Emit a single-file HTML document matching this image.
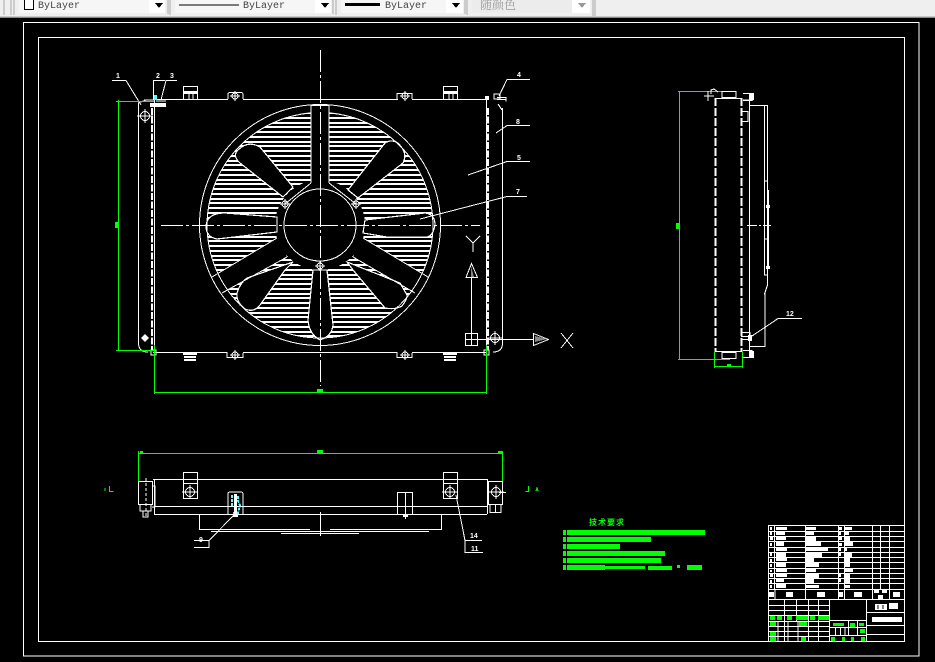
<!DOCTYPE html>
<html><head><meta charset="utf-8"><style>
html,body{margin:0;padding:0;background:#000;width:935px;height:662px;overflow:hidden}
svg{display:block}
.w{fill:none;stroke:#fff;stroke-width:1}
.t{font-family:"Liberation Sans",sans-serif;font-size:7px;fill:#fff;font-weight:bold}
.b{font-family:"Liberation Mono",monospace;font-size:10px;fill:#444}
</style></head><body>
<svg width="935" height="662" viewBox="0 0 935 662" shape-rendering="crispEdges" xmlns="http://www.w3.org/2000/svg">
<defs>
<clipPath id="c"><circle cx="320" cy="225" r="113"/></clipPath>
<g id="tg"><path class="w" d="M-8 0h16M0-7v14"/><circle class="w" r="4.5"/></g>
<g id="sm"><path class="w" d="M-5 0h10M0-5v10"/><circle class="w" r="3" stroke-width="2"/></g>
</defs>
<rect width="935" height="662" fill="#000"/>
<!-- toolbar -->
<rect width="935" height="18" fill="#efefef"/>
<rect y="17" width="935" height="1" fill="#8a8a8a"/>
<rect y="16" width="935" height="1" fill="#c8c8c8"/>
<path d="M4 0v15M11 0v15M14 0v15M170 0v15M336 0v15M467 0v15M593 0v16M595 0v16M168 0v14M333 0v14M465 0v14" stroke="#a8a8a8" fill="none"/>
<rect x="19" y="0" width="146" height="13" fill="#f6f6f6"/><rect x="149" y="0" width="16" height="13" fill="#fff"/>
<rect x="175" y="0" width="156" height="13" fill="#f6f6f6"/><rect x="315" y="0" width="16" height="13" fill="#fff"/>
<rect x="341" y="0" width="122" height="13" fill="#f6f6f6"/><rect x="446" y="0" width="17" height="13" fill="#fff"/>
<rect x="472" y="0" width="100" height="13" fill="#ececec"/><rect x="572" y="0" width="18" height="13" fill="#fff"/>
<rect x="24.5" y="-1" width="9" height="10.5" fill="#fff" stroke="#000"/>
<text class="b" x="38" y="8">ByLayer</text>
<path d="M179 5h60" stroke="#000"/>
<text class="b" x="243" y="8">ByLayer</text>
<rect x="345" y="3" width="35" height="3" fill="#000"/>
<text class="b" x="385" y="8">ByLayer</text>
<text x="480" y="9" font-family="'Liberation Sans','Noto Serif CJK SC',serif" font-size="12" fill="#999">随颜色</text>
<path d="M155 3h8l-4 5zM321 3h8l-4 5zM452 3h8l-4 5z" fill="#000"/>
<path d="M578 3h8l-4 5z" fill="#999"/>
<!-- borders -->
<rect x="23.5" y="22.5" width="895.5" height="633.5" class="w"/>
<rect x="38.5" y="37.5" width="866" height="604" class="w"/>
<!-- fan hatch -->
<g clip-path="url(#c)">
<path stroke="#fff" stroke-width="2" fill="none" d="M190 113h260M190 118h260M190 123h260M190 127h260M190 132h260M190 137h260M190 142h260M190 146h260M190 151h260M190 156h260M190 161h260M190 165h260M190 170h260M190 175h260M190 180h260M190 184h260M190 189h260M190 194h260M190 199h260M190 203h260M190 208h260M190 213h260M190 218h260M190 222h260M190 227h260M190 232h260M190 237h260M190 241h260M190 246h260M190 251h260M190 256h260M190 260h260M190 265h260M190 270h260M190 275h260M190 279h260M190 284h260M190 289h260M190 294h260M190 298h260M190 303h260M190 308h260M190 313h260M190 317h260M190 322h260M190 327h260M190 332h260M190 336h260"/>
</g>
<g>
<circle cx="320" cy="225" r="45" fill="#000"/>
<rect x="311" y="104" width="18" height="85" fill="#000"/>
<path d="M277 238L212 277L222 293L287 257Z" fill="#000"/>
<path d="M363 238L428 277L415 293L353 257Z" fill="#000"/>
<g fill="#000" stroke="#fff" stroke-width="1.2">
<path d="M293 187L260 147Q248 140 238 150Q232 156 240 163L283 197Z"/>
<path d="M348 190L385 143Q395 137 402 148Q407 155 403 163L358 198Z"/>
<path d="M277 217L225 213Q207 213 206 226Q206 237 217 239L277 232Z"/>
<path d="M365 220L425 213Q435 214 435 225Q433 236 427 237L387 237L363 233Z"/>
<path d="M313 270L308 320Q309 334 320 340Q332 336 333 325L327 270Z"/>
<path d="M293 262L285 270L260 305Q254 313 245 309Q236 302 237 293Q240 283 247 278Z"/>
<path d="M347 262L353 270L385 308Q395 310 402 306Q408 298 407 295L400 283Z"/>
</g>
<g class="w">
<circle cx="320" cy="225" r="36"/>
<circle cx="320" cy="225" r="120.5"/>
<path d="M207 225A113 113 0 0 1 311 113M329 113A113 113 0 0 1 433 225A113 113 0 0 1 320 338A113 113 0 0 1 207 225"/>
<path d="M311 105.500V183M329 105.500V183M311 105.500H329M277 238L212 277M287 257L222 293M363 238L428 277M353 257L415 293M285 204L311 183M356 204L329 183"/>
</g>
</g>
<use href="#sm" x="285" y="204"/><use href="#sm" x="356" y="204"/><use href="#sm" x="320" y="266"/>
<!-- center lines -->
<path stroke="#fff" stroke-dasharray="22 3 3 3" fill="none" d="M320.5 50V386M161 225.5H480"/>
<!-- main frame -->
<path class="w" d="M153 99.5H487M227 99.5h1v-5q0-2 2-2h11q2 0 2 2v5M397 99.5v-6h15v6"/>
<path stroke="#000" d="M228 99.5h15M398 99.5h14"/>
<path class="w" d="M153 352.5H227v5h16v-5H397v5h15v-5H487"/>
<path stroke="#000" d="M228 352.5h15M398 352.5h14"/>
<path class="w" d="M138.500 103V343Q138.500 352 148 352M154.500 100V352M502.500 108V343Q502.500 352 493 352M486.500 99V352"/>
<path fill="none" stroke="#fff" stroke-width="2" stroke-dasharray="7 1.500" d="M152 108V350M488 108V350"/>
<path class="w" d="M151 350h5v5h-5zM484 350h5v5h-5z"/>
<use href="#sm" x="235" y="96"/><use href="#sm" x="405" y="96"/>
<use href="#sm" x="235" y="355"/><use href="#sm" x="405" y="355"/>
<use href="#tg" x="145" y="116"/><use href="#tg" x="495" y="338"/>
<circle cx="145" cy="338" r="3" fill="#fff"/><path class="w" d="M141 338h8M145 334v8"/>
<!-- top boxes -->
<path class="w" d="M183.500 86.500h14v13h-14zM443.500 86.500h14v13h-14z"/>
<rect x="184" y="91" width="13" height="3" fill="#fff"/><rect x="444" y="91" width="13" height="3" fill="#fff"/>
<path class="w" d="M189 94v5M193 94v5M449 94v5M453 94v5"/>
<path stroke="#fff" stroke-width="2" fill="none" d="M183 354h14M184 357h12M184 360h12M443 354h14M444 357h12M444 360h12"/>
<!-- top-left details -->
<rect x="150" y="103" width="16" height="4" fill="#fff"/>
<rect x="153" y="95" width="4" height="5" fill="#5ff"/>
<path class="w" d="M144 100h10M138 103l8-3M156 101h10"/>
<rect x="485" y="96" width="4" height="4" fill="#fff"/>
<path stroke="#fff" fill="none" d="M494 94h6v5h-6zM497 99.500h9M497 97.500h9v4M498 104l4 6"/>
<!-- leaders -->
<g class="w">
<path d="M112 80.500H126L141 105M153.500 100V80.500H165M177 80.500H166L161 100M530 79.500H507L499 96M530 125.500H507L496 133M530 161.500H507L468 175M527 196.500H507L420 219M802 318.500H778L752 336M235 514L209 540.500H194M194 547.500H209V540M456 495L465 540.500H482M465 540V552.500H483"/>
</g>
<text class="t" x="116" y="78">1</text><text class="t" x="156" y="78">2</text><text class="t" x="170" y="78">3</text>
<text class="t" x="517" y="77">4</text><text class="t" x="516" y="124">8</text><text class="t" x="517" y="160">5</text><text class="t" x="516" y="194">7</text>
<text class="t" x="786" y="316">12</text>
<text class="t" x="199" y="542">9</text><text class="t" x="470" y="538">14</text><text class="t" x="471" y="551">11</text>
<!-- green dims main -->
<path stroke="#0f0" fill="none" d="M118.500 100V351M116 101.500H154M116 350.500H154M154.500 345V394M486.500 345V394M154 392.500H487"/>
<rect x="115" y="222" width="4" height="6" fill="#0f0"/>
<rect x="317" y="389" width="6" height="4" fill="#0f0"/>
<!-- UCS -->
<g>
<path class="w" d="M466 236l7 7 7-7M473 243v9M471.500 273V333M477 339.500H533M561 333l12 15M573 333l-12 15"/>
<path class="w" d="M466 277.500h11.500l-6-14zM533.500 333.500v12l15-6z"/>
<path d="M471 266v11h3zM535 336l12 3-12 3z" fill="#888"/>
</g>
<path class="w" d="M465.500 333.500h12v12h-12zM471.500 333.500v12M465.500 339.500h12"/>
<!-- side view -->
<path stroke="#0f0" fill="none" d="M679.500 91V360M678 91.500H730M678 359.500H730M714.500 352V368M742.500 352V368M714 366.500H743"/>
<rect x="676" y="223" width="4" height="6" fill="#0f0"/><rect x="727" y="364" width="4" height="3" fill="#0f0"/>
<path fill="none" stroke="#fff" stroke-width="2" stroke-dasharray="8 2" d="M715.500 98V352M741.500 98V352"/>
<path class="w" d="M715 98.500h27M715 351.500h27M749.500 93V358M743 93.500h9v7h-9M743 100h10M743 357.500h9v-7h-9M722 92v6M722 352v7M736 92v7M722 352.500h14v6h-14zM722 91.500h14v6h-14zM741 111.500h7v10h-7M741 336.500h9v-4h-9M741 339.500h9"/>
<rect x="750" y="93" width="4" height="7" fill="#fff"/><rect x="750" y="351" width="4" height="7" fill="#fff"/>
<rect x="748" y="335" width="4" height="6" fill="#fff"/>
<path class="w" d="M711 94v-4l3-1 4 3M704 96h10M708 91v10"/>
<path class="w" d="M750 105.500H767.500V275V285L764.500 294H765V346.500H750M764.500 105V275h3M764.500 181h3M764.500 239h3"/>
<rect x="767" y="190" width="2" height="78" fill="#fff"/>
<rect x="766" y="205" width="4" height="3" fill="#fff"/><rect x="766" y="266" width="4" height="3" fill="#fff"/>
<path stroke="#fff" stroke-dasharray="10 2 2 2" d="M747 225.500H771"/>
<!-- bottom view -->
<path stroke="#0f0" fill="none" d="M138.500 451V482M502.500 451V482M138 453.500H503"/>
<rect x="317" y="450" width="6" height="3" fill="#0f0"/><rect x="498" y="451" width="5" height="2" fill="#0f0"/><rect x="140" y="451" width="3" height="2" fill="#0f0"/>
<path stroke="#0f0" fill="none" d="M109.500 486v5.500h4M105 488v3M528.500 486v5.500h-3M536 491l1-3 1 3"/>
<path class="w" d="M153 479.500H487.500M154 506.500H488M154 514.500H487M154.500 479V514M487.500 479V514"/>
<path class="w" d="M138.500 481.500h14v23h-14zM140 504v7h11v-7M143 511v6h5v-6M152 486h3v21h-3"/>
<path stroke="#fff" stroke-dasharray="3 2" d="M146 478V518"/>
<path class="w" d="M183.500 472.500h14v26h-14zM183.500 483.500h14M443.500 472.500h14v26h-14zM443.500 483.500h14"/>
<use href="#tg" x="190" y="492"/><use href="#tg" x="450" y="492"/>
<path class="w" d="M228 514V494q0-2 2-2h11q2 0 2 2v20M397.500 514V492.500h15V514M405.500 492V519"/>
<rect x="403" y="514" width="5" height="3" fill="#fff"/>
<path stroke="#5ff" fill="none" stroke-width="2" stroke-dasharray="3 1" d="M232 506V496h6v5l2 4-2 8h-5"/>
<rect x="234" y="494" width="3" height="22" fill="#fff"/><rect x="233" y="514" width="5" height="3" fill="#fff"/>
<path class="w" d="M199.500 514V529.500H310M330 529.500H441.500V514M211 531.500H429M281 533.500H359M320.500 512V536"/>
<path class="w" d="M488.500 481.500h14v23h-14zM490 504v8.500h11V504M495.500 504v8"/>
<path class="w" d="M489 486h-2M489 499h-2M499 492.500h7"/>
<use href="#tg" x="496" y="492"/>
<!-- tech requirements -->
<text x="589" y="525" font-family="'Liberation Sans','Noto Sans CJK SC',sans-serif" font-size="8" font-weight="bold" fill="#0f0" letter-spacing="1">技术要求</text>
<g fill="#0f0">
<rect x="567" y="530" width="138" height="5"/><rect x="567" y="537" width="84" height="5"/><rect x="567" y="544" width="53" height="5"/><rect x="567" y="551" width="98" height="5"/><rect x="567" y="558" width="94" height="5"/>
<rect x="567" y="565" width="38" height="5"/><rect x="605" y="566" width="40" height="3"/><rect x="648" y="566" width="24" height="4"/><rect x="677" y="565" width="3" height="3"/><rect x="687" y="565" width="15" height="5"/>
<rect x="563" y="530" width="3" height="5"/><rect x="563" y="537" width="3" height="5"/><rect x="563" y="544" width="3" height="5"/><rect x="563" y="551" width="3" height="5"/><rect x="563" y="558" width="3" height="5"/><rect x="563" y="565" width="3" height="5"/>
</g>
<!-- title block -->
<path class="w" d="M768.500 525.500H904.500M768.500 531.500H904M768.500 536.500H904M768.500 541.500H904M768.500 547.500H904M768.500 552.500H904M768.500 557.500H904M768.500 562.500H904M768.500 568.500H904M768.500 573.500H904M768.500 578.500H904M768.500 583.500H904M768.500 589.500H904M768.500 599.500H904M768.500 525V641M774.500 525V589M805.500 525V599M838.500 525V599M844.500 525V599M872.500 525V599M880.500 525V589M889.500 525V599M775 589V599"/>
<g fill="#fff">
<rect x="776" y="527" width="11" height="3"/><rect x="776" y="532" width="9" height="3"/><rect x="776" y="537" width="10" height="3"/><rect x="776" y="542" width="8" height="4"/><rect x="776" y="548" width="11" height="3"/><rect x="776" y="553" width="10" height="4"/><rect x="776" y="558" width="11" height="3"/><rect x="776" y="563" width="10" height="4"/><rect x="776" y="569" width="11" height="3"/><rect x="776" y="574" width="11" height="3"/><rect x="776" y="579" width="8" height="3"/><rect x="776" y="584" width="10" height="4"/>
<rect x="806" y="527" width="10" height="3"/><rect x="806" y="532" width="8" height="3"/><rect x="806" y="537" width="10" height="4"/><rect x="806" y="542" width="15" height="4"/><rect x="806" y="548" width="22" height="3"/><rect x="806" y="553" width="16" height="4"/><rect x="806" y="558" width="8" height="4"/><rect x="806" y="563" width="13" height="4"/><rect x="806" y="569" width="10" height="3"/><rect x="806" y="574" width="13" height="4"/><rect x="806" y="579" width="8" height="4"/><rect x="806" y="585" width="13" height="3"/>
<rect x="845" y="527" width="7" height="3"/><rect x="845" y="532" width="4" height="3"/><rect x="845" y="537" width="5" height="4"/><rect x="845" y="542" width="8" height="4"/><rect x="845" y="548" width="2" height="3"/><rect x="845" y="553" width="7" height="4"/><rect x="845" y="558" width="5" height="4"/><rect x="845" y="563" width="5" height="4"/><rect x="845" y="569" width="8" height="3"/><rect x="845" y="574" width="5" height="4"/><rect x="845" y="579" width="5" height="4"/><rect x="845" y="585" width="5" height="3"/>
<rect x="770" y="527" width="2" height="3"/><rect x="770" y="532" width="2" height="3"/><rect x="770" y="537" width="3" height="3"/><rect x="770" y="543" width="2" height="3"/><rect x="770" y="553" width="2" height="3"/><rect x="770" y="559" width="2" height="3"/><rect x="770" y="564" width="2" height="3"/><rect x="770" y="570" width="2" height="2"/><rect x="770" y="574" width="3" height="3"/><rect x="770" y="580" width="2" height="3"/><rect x="770" y="585" width="2" height="3"/>
<rect x="839" y="527" width="3" height="3"/><rect x="839" y="532" width="2" height="3"/><rect x="839" y="537" width="3" height="3"/><rect x="839" y="543" width="3" height="3"/><rect x="839" y="548" width="2" height="3"/><rect x="839" y="553" width="2" height="3"/><rect x="839" y="574" width="2" height="3"/><rect x="839" y="579" width="2" height="3"/>
<rect x="786" y="592" width="7" height="5"/><rect x="817" y="592" width="8" height="5"/><rect x="854" y="592" width="8" height="5"/><rect x="893" y="592" width="7" height="5"/><rect x="769" y="592" width="5" height="5"/><rect x="839" y="592" width="4" height="5"/><rect x="874" y="590" width="5" height="3"/><rect x="882" y="590" width="5" height="3"/><rect x="878" y="595" width="5" height="4"/>
<rect x="875" y="604" width="12" height="6"/><rect x="889" y="603" width="9" height="6"/>
<rect x="872" y="617" width="30" height="5"/>
</g>
<path stroke="#000" d="M878 605v4M883 605v4"/>
<path class="w" d="M904.500 525V641M866.500 599V641M866 612.500H904M866 625.500H904M866 634.500H904"/>
<path class="w" d="M829.500 599V641M784.500 599V641M796.500 599V621M808.500 599V641M818.500 599V641M768 605.500H829M768 610.500H829M768 615.500H829M768 621.500H829M768 626.500H829M768 631.500H829M768 636.500H829M778 621V641M788 621V641M798 621V641M829 620.500H866M829 627.500H866M829 635.500H866M848.500 620V635M857.500 620V635M835.500 628V635M840.500 628V635M845 628V635"/>
<g fill="#0f0">
<rect x="770" y="616" width="5" height="4"/><rect x="777" y="616" width="5" height="4"/><rect x="787" y="616" width="5" height="4"/><rect x="796" y="616" width="12" height="4"/><rect x="810" y="616" width="5" height="4"/><rect x="818" y="616" width="11" height="4"/>
<rect x="770" y="622" width="6" height="4"/><rect x="799" y="622" width="8" height="4"/><rect x="770" y="632" width="6" height="4"/><rect x="770" y="637" width="6" height="4"/><rect x="801" y="637" width="5" height="4"/><rect x="831" y="637" width="4" height="4"/><rect x="842" y="637" width="3" height="4"/><rect x="851" y="637" width="3" height="4"/><rect x="861" y="637" width="4" height="4"/>
<rect x="833" y="623" width="11" height="3"/><rect x="850" y="623" width="5" height="4"/><rect x="859" y="623" width="5" height="3"/><rect x="860" y="629" width="5" height="4"/>
</g>
</svg>
</body></html>
